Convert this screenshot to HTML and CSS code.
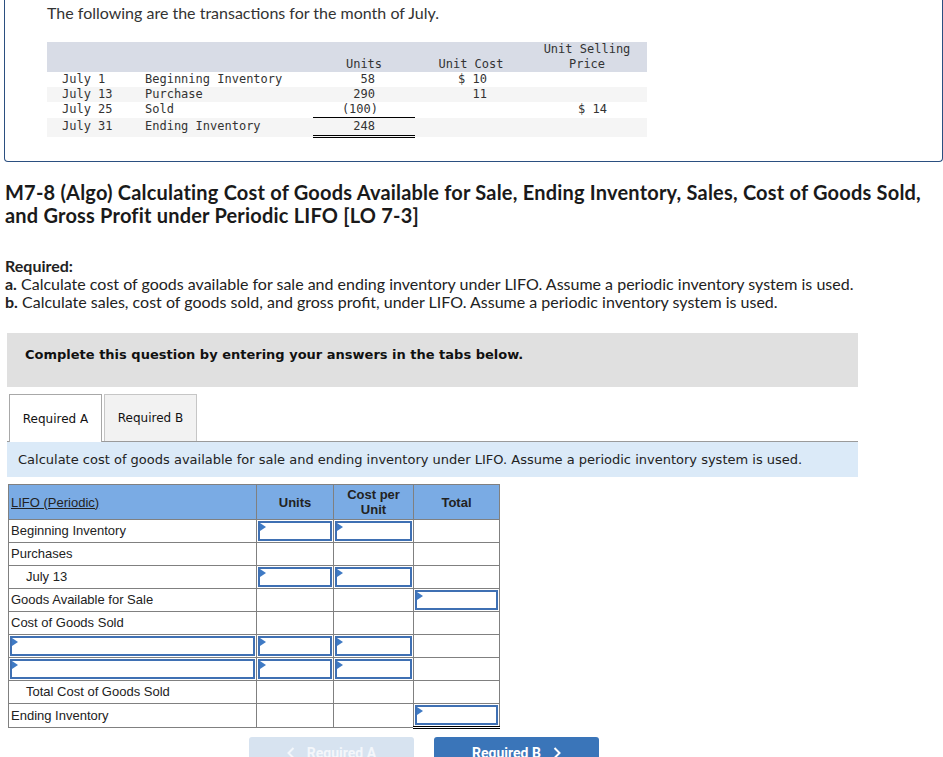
FILE: index.html
```html
<!DOCTYPE html>
<html lang="en">
<head>
<meta charset="utf-8">
<title>M7-8 (Algo)</title>
<link rel="stylesheet" href="styles.css">
</head>
<body>
<div class="problem">
  <p class="intro">The following are the transactions for the month of July.</p>
  <table class="tx">
    <colgroup><col class="c-date"><col class="c-desc"><col class="c-units"><col class="c-cost"><col class="c-price"></colgroup>
    <thead>
      <tr><th></th><th></th><th>Units</th><th>Unit Cost</th><th>Unit Selling<br>Price</th></tr>
    </thead>
    <tbody>
      <tr><td class="date">July 1</td><td>Beginning Inventory</td><td class="num">58</td><td class="num">$ 10</td><td></td></tr>
      <tr class="alt"><td class="date">July 13</td><td>Purchase</td><td class="num">290</td><td class="num">11</td><td></td></tr>
      <tr><td class="date">July 25</td><td>Sold</td><td class="num under"><span class="neg">(100)</span></td><td></td><td class="num">$ 14</td></tr>
      <tr class="alt last"><td class="date">July 31</td><td>Ending Inventory</td><td class="num dbl">248</td><td></td><td></td></tr>
    </tbody>
  </table>
</div>

<h1 class="title">M7-8 (Algo) Calculating Cost of Goods Available for Sale, Ending Inventory, Sales, Cost of Goods Sold,<br>and Gross Profit under Periodic LIFO [LO 7-3]</h1>

<div class="req">
  <p class="req-h">Required:</p>
  <p><b>a.</b> Calculate cost of goods available for sale and ending inventory under LIFO. Assume a periodic inventory system is used.</p>
  <p><b>b.</b> Calculate sales, cost of goods sold, and gross profit, under LIFO. Assume a periodic inventory system is used.</p>
</div>

<div class="work">
  <div class="instruct">Complete this question by entering your answers in the tabs below.</div>
  <div class="tabs">
    <div class="tab active">Required A</div>
    <div class="tab">Required B</div>
  </div>
  <div class="band">Calculate cost of goods available for sale and ending inventory under LIFO. Assume a periodic inventory system is used.</div>

  <table class="grid">
    <colgroup><col class="g-label"><col class="g-units"><col class="g-cost"><col class="g-total"></colgroup>
    <thead>
      <tr><th class="lbl"><u>LIFO (Periodic)</u></th><th>Units</th><th>Cost per<br>Unit</th><th>Total</th></tr>
    </thead>
    <tbody>
      <tr><td>Beginning Inventory</td><td class="in"><div class="inp"></div></td><td class="in"><div class="inp"></div></td><td></td></tr>
      <tr><td>Purchases</td><td></td><td></td><td></td></tr>
      <tr><td class="ind">July 13</td><td class="in"><div class="inp"></div></td><td class="in"><div class="inp"></div></td><td></td></tr>
      <tr><td>Goods Available for Sale</td><td></td><td></td><td class="in"><div class="inp"></div></td></tr>
      <tr><td>Cost of Goods Sold</td><td></td><td></td><td></td></tr>
      <tr><td class="in"><div class="inp"></div></td><td class="in"><div class="inp"></div></td><td class="in"><div class="inp"></div></td><td></td></tr>
      <tr><td class="in"><div class="inp"></div></td><td class="in"><div class="inp"></div></td><td class="in"><div class="inp"></div></td><td></td></tr>
      <tr><td class="ind">Total Cost of Goods Sold</td><td></td><td></td><td></td></tr>
      <tr><td>Ending Inventory</td><td></td><td></td><td class="in ei"><div class="inp"></div></td></tr>
    </tbody>
  </table>

  <div class="nav">
    <button class="btn prev" type="button"><svg class="chev" viewBox="0 0 8 12" width="8" height="12"><path d="M6.5 1 L1.5 6 L6.5 11" fill="none" stroke="currentColor" stroke-width="2"/></svg><span>Required A</span></button>
    <button class="btn next" type="button"><span>Required B</span><svg class="chev" viewBox="0 0 8 12" width="8" height="12"><path d="M1.5 1 L6.5 6 L1.5 11" fill="none" stroke="currentColor" stroke-width="2"/></svg></button>
  </div>
</div>
</body>
</html>
```

FILE: styles.css
```css
html, body {
  margin: 0;
  padding: 0;
  background: #fff;
}
body {
  width: 943px;
  overflow: hidden;
  font-family: "Lato", "Open Sans", sans-serif;
  color: #333;
}

/* problem box */
.problem {
  margin-left: 4px;
  border: 1px solid #2b4f80;
  border-top: none;
  border-radius: 0 0 4px 4px;
  padding-bottom: 23px;
}
.intro {
  margin: 0;
  padding: 3px 0 0 42px;
  font-size: 16px;
  line-height: 19px;
  color: #333;
}
.tx {
  margin: 20px 0 0 42px;
  border-collapse: collapse;
  border-spacing: 0;
  font-family: "DejaVu Sans Mono", "Liberation Mono", monospace;
  font-size: 12px;
  color: #333;
}
.c-date { width: 98px; }
.c-desc { width: 168px; }
.c-units { width: 102px; }
.c-cost { width: 112px; }
.c-price { width: 120px; }
.tx thead tr { background: #d8dce6; }
.tx th {
  font-weight: normal;
  text-align: center;
  vertical-align: bottom;
  line-height: 15px;
  padding: 0;
  height: 30px;
}
.tx td {
  padding: 0;
  line-height: 15px;
  height: 15px;
  white-space: pre;
}
.tx td.date { padding-left: 15px; }
.tx tr.alt { background: #f5f5f5; }
.tx td.num { text-align: right; padding-right: 40px; }
.tx td.under { border-bottom: 1px solid #000; }
.tx td.dbl { border-bottom: 3px double #000; }
.tx .neg { margin-right: -3px; }
.tx tr.last td { height: 16px; vertical-align: top; padding-top: 1px; }

/* title */
.title {
  margin: 19px 0 0 0;
  padding-left: 5px;
  font-size: 20px;
  letter-spacing: 0.2px;
  line-height: 23px;
  font-weight: 700;
  color: #1a1a1a;
}
.req {
  margin-top: 30px;
  padding-left: 5px;
  font-size: 16px;
  line-height: 18px;
  color: #222;
}
.req p { margin: 0; }
.req .req-h { font-weight: 700; }

/* work area */
.work {
  margin: 22px 0 0 7px;
  width: 851px;
  font-family: "DejaVu Sans", Verdana, sans-serif;
}
.instruct {
  background: #e0e0e0;
  padding: 14px 18px 24px;
  line-height: 16px;
  font-size: 13px;
  font-weight: 700;
  color: #111;
}
.tabs {
  margin-top: 7px;
  display: flex;
  gap: 2px;
  padding-left: 2px;
  height: 47px;
  border-bottom: 1px solid #9a9a9a;
}
.tab {
  box-sizing: border-box;
  width: 93px;
  height: 47px;
  border: 1px solid #c6c6c6;
  border-bottom: none;
  background: #f2f2f2;
  display: flex;
  align-items: center;
  justify-content: center;
  font-size: 12px;
  color: #111;
}
.tab.active {
  background: #fff;
  border-color: #a8a8a8;
  height: 48px;
  margin-bottom: -1px;
}
.band {
  background: #dbeaf8;
  height: 35px;
  line-height: 35px;
  padding-left: 11px;
  font-size: 13px;
  color: #222;
}

/* grid */
.grid {
  margin: 7px 0 0 1px;
  border-collapse: collapse;
  border-spacing: 0;
  font-family: "Liberation Sans", Arial, sans-serif;
  font-size: 13px;
  color: #222;
}
.g-label { width: 248px; }
.g-units { width: 77px; }
.g-cost { width: 80px; }
.g-total { width: 86px; }
.grid th, .grid td {
  border: 1px solid #808080;
}
.grid th {
  background: #7aabe4;
  height: 34px;
  padding: 0;
  line-height: 15px;
  font-weight: 700;
  text-align: center;
}
.grid th.lbl {
  text-align: left;
  font-weight: normal;
  padding-left: 2px;
}
.grid td {
  height: 22px;
  padding: 0 0 0 2px;
  line-height: 16px;
}
.grid td.ind { padding-left: 17px; }
.grid td.in { padding: 1px; height: 20px; }
.inp {
  position: relative;
  box-sizing: border-box;
  height: 20px;
  border: 2px solid #3f70b3;
  background: #fff;
}
.inp::before {
  content: "";
  position: absolute;
  top: 0;
  left: 0;
  border-left: 6px solid #3f7ac4;
  border-top: 4px solid transparent;
  border-bottom: 4px solid transparent;
}
.grid td.ei {
  border-top: 1px solid #000;
  border-bottom: 3px double #000;
}

/* nav buttons */
.nav {
  margin-top: 8px;
  display: flex;
  gap: 20px;
  padding-left: 242px;
}
.btn {
  width: 165px;
  height: 31px;
  border: none;
  border-radius: 3px 3px 0 0;
  font-family: "Roboto", "Liberation Sans", sans-serif;
  font-weight: 700;
  font-size: 14px;
  color: #fff;
  display: flex;
  align-items: center;
  justify-content: center;
  gap: 12px;
  padding: 0;
}
.prev { background: #d7e3f0; color: #f4f7fb; }
.next { background: #3a75b9; }
.chev { display: block; }
```
